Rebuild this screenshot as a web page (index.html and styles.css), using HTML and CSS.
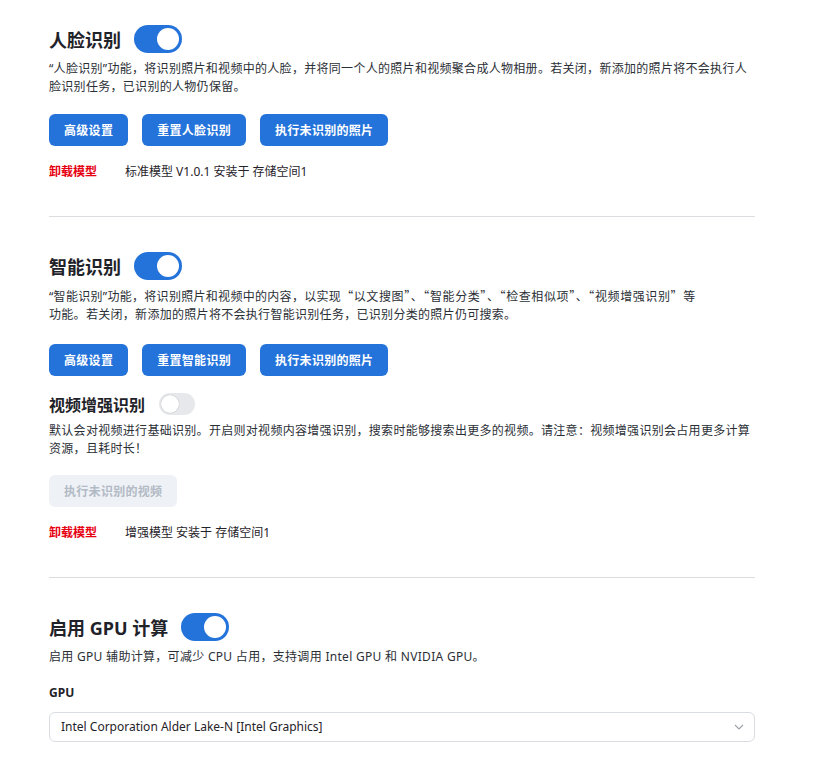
FILE: index.html
```html
<!DOCTYPE html>
<html lang="zh-CN">

<head>
    <meta charset="utf-8">
    <meta name="viewport" content="width=device-width, initial-scale=1.0">
    <title>识别设置</title>
    <link rel="stylesheet" href="styles.css">
</head>

<body>
    <main class="indstillinger">

        <section class="blok">
            <div class="titel">
                <h2>人脸识别</h2>
                <span class="kontakt til"><span class="knop"></span></span>
            </div>
            <p class="tekst">“人脸识别”功能，将识别照片和视频中的人脸，并将同一个人的照片和视频聚合成人物相册。若关闭，新添加的照片将不会执行人<br>脸识别任务，已识别的人物仍保留。</p>
            <div class="knapper">
                <button class="knap">高级设置</button>
                <button class="knap">重置人脸识别</button>
                <button class="knap">执行未识别的照片</button>
            </div>
            <div class="model">
                <span class="fjern">卸载模型</span>
                <span>标准模型 V1.0.1 安装于 存储空间1</span>
            </div>
        </section>

        <section class="blok">
            <div class="titel">
                <h2>智能识别</h2>
                <span class="kontakt til"><span class="knop"></span></span>
            </div>
            <p class="tekst">“智能识别”功能，将识别照片和视频中的内容，以实现<span class="citat">“以文搜图”、“智能分类”、“检查相似项”、“视频增强识别”</span>等<br>功能。若关闭，新添加的照片将不会执行智能识别任务，已识别分类的照片仍可搜索。</p>
            <div class="knapper luft">
                <button class="knap">高级设置</button>
                <button class="knap">重置智能识别</button>
                <button class="knap">执行未识别的照片</button>
            </div>
            <div class="titel lille">
                <h3>视频增强识别</h3>
                <span class="kontakt fra"><span class="knop"></span></span>
            </div>
            <p class="tekst">默认会对视频进行基础识别。开启则对视频内容增强识别，搜索时能够搜索出更多的视频。请注意：视频增强识别会占用更多计算<br>资源，且耗时长！</p>
            <div class="knapper">
                <button class="knap slukket" disabled>执行未识别的视频</button>
            </div>
            <div class="model">
                <span class="fjern">卸载模型</span>
                <span>增强模型 安装于 存储空间1</span>
            </div>
        </section>

        <section class="blok sidst">
            <div class="titel">
                <h2>启用 GPU 计算</h2>
                <span class="kontakt til"><span class="knop"></span></span>
            </div>
            <p class="tekst">启用 GPU 辅助计算，可减少 CPU 占用，支持调用 Intel GPU 和 NVIDIA GPU。</p>
            <div class="felt">GPU</div>
            <div class="vaelger">
                <span>Intel Corporation Alder Lake-N [Intel Graphics]</span>
                <svg width="10" height="6" viewBox="0 0 10 6"><path d="M1 1l4 4 4-4" fill="none" stroke="#9aa0a8" stroke-width="1.1"/></svg>
            </div>
        </section>

    </main>
</body>

</html>
```

FILE: styles.css
```css
body {
    margin: 0;
    background-color: white;
    color: #1f2329;
    font-family: "Noto Sans", "Noto Sans CJK SC", sans-serif;
}

.indstillinger {
    width: 706px;
    margin-left: 49px;
    padding-top: 22px;
}

.blok {
    border-bottom: 1px solid #dcdde0;
    padding-bottom: 36px;
    margin-bottom: 32px;
}

.sidst {
    border-bottom: none;
    padding-bottom: 0;
    margin-bottom: 0;
}

.titel {
    display: flex;
    align-items: center;
    gap: 13px;
    height: 34px;
}

.titel h2 {
    margin: 0;
    font-size: 18px;
    font-weight: 700;
    color: #1f2329;
}

.titel h3 {
    margin: 0;
    font-size: 16px;
    font-weight: 700;
}

.lille {
    height: 26px;
    margin-top: 15px;
    gap: 14px;
}

.kontakt {
    display: flex;
    align-items: center;
    border-radius: 14px;
}

.kontakt.til {
    width: 48px;
    height: 28px;
    background-color: #2473db;
    justify-content: flex-end;
}

.kontakt.til .knop {
    width: 22px;
    height: 22px;
    margin-right: 3px;
    border-radius: 50%;
    background-color: white;
}

.kontakt.fra {
    width: 36px;
    height: 22px;
    background-color: #e6e8eb;
}

.kontakt.fra .knop {
    width: 18px;
    height: 18px;
    margin-left: 2px;
    border-radius: 50%;
    background-color: white;
    box-shadow: 0 0 1px rgba(0, 0, 0, 0.35);
}

.tekst {
    margin: 4px 0 0 0;
    font-size: 12px;
    line-height: 17.5px;
    letter-spacing: 0.3px;
    color: #2b2f36;
    white-space: nowrap;
}

.citat {
    font-family: "Noto Sans CJK SC", sans-serif;
    letter-spacing: 0.6px;
}

.lille + .tekst {
    margin-top: 5px;
}

.knapper {
    display: flex;
    gap: 14px;
    margin-top: 19px;
}

.knapper.luft {
    margin-top: 21px;
}

.lille + .tekst + .knapper {
    margin-top: 18px;
}

.knap {
    height: 32px;
    padding: 0 15px;
    border: none;
    border-radius: 6px;
    background-color: #2473db;
    color: white;
    font-family: inherit;
    font-size: 12px;
    font-weight: 700;
    letter-spacing: 0.3px;
}

.knap.slukket {
    background-color: #eef1f5;
    color: #b2bac5;
}

.model {
    display: flex;
    margin-top: 17px;
    font-size: 12px;
    line-height: 17px;
}

.fjern {
    width: 76px;
    color: #e60012;
    font-weight: 700;
}

.felt {
    margin-top: 18px;
    font-size: 12px;
    font-weight: 700;
}

.vaelger {
    display: flex;
    justify-content: space-between;
    align-items: center;
    height: 28px;
    margin-top: 11px;
    padding: 0 10px 0 11px;
    border: 1px solid #d9dce1;
    border-radius: 6px;
    font-size: 12px;
}
```
